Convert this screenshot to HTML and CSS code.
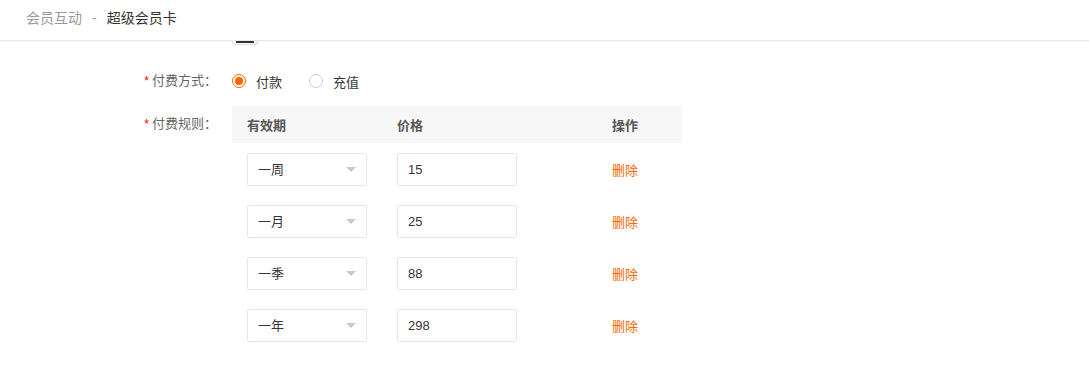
FILE: index.html
```html
<!DOCTYPE html>
<html lang="zh-CN">
<head>
    <meta charset="UTF-8">
    <meta name="viewport" content="width=device-width, initial-scale=1.0">
    <title>超级会员卡</title>
    <link rel="stylesheet" href="styles.css">
</head>
<body>
    <div class="header">
        <div class="crumb">
            <span class="crumb-parent">会员互动</span>
            <span class="crumb-sep">-</span>
            <span class="crumb-cur">超级会员卡</span>
        </div>
    </div>

    <div class="main">
        <div class="stub-row"><div class="stub"></div></div>

        <div class="form-item">
            <label class="form-label"><span class="req">*</span>付费方式：</label>
            <div class="form-control radios">
                <label class="radio checked"><span class="radio-dot"></span>付款</label>
                <label class="radio"><span class="radio-dot"></span>充值</label>
            </div>
        </div>

        <div class="form-item">
            <label class="form-label rule-label"><span class="req">*</span>付费规则：</label>
            <div class="form-control">
                <table class="rules">
                    <thead>
                        <tr>
                            <th class="col-period">有效期</th>
                            <th class="col-price">价格</th>
                            <th class="col-op">操作</th>
                        </tr>
                    </thead>
                    <tbody>
                        <tr>
                            <td><div class="select">一周<span class="arrow"></span></div></td>
                            <td><div class="input">15</div></td>
                            <td><a class="del">删除</a></td>
                        </tr>
                        <tr>
                            <td><div class="select">一月<span class="arrow"></span></div></td>
                            <td><div class="input">25</div></td>
                            <td><a class="del">删除</a></td>
                        </tr>
                        <tr>
                            <td><div class="select">一季<span class="arrow"></span></div></td>
                            <td><div class="input">88</div></td>
                            <td><a class="del">删除</a></td>
                        </tr>
                        <tr>
                            <td><div class="select">一年<span class="arrow"></span></div></td>
                            <td><div class="input">298</div></td>
                            <td><a class="del">删除</a></td>
                        </tr>
                    </tbody>
                </table>
            </div>
        </div>
    </div>
</body>
</html>
```

FILE: styles.css
```css
body {
    margin: 0;
    padding: 0;
    font-family: "Liberation Sans", "Noto Sans CJK SC", sans-serif;
    font-size: 13px;
    color: #333;
    background-color: #fff;
}

.header {
    height: 40px;
    border-bottom: 1px solid #e8e8e8;
    box-shadow: 0 1px 2px rgba(0,0,0,0.03);
    display: flex;
    align-items: center;
    padding-left: 26px;
}

.crumb {
    display: flex;
    font-size: 14px;
    line-height: 20px;
    margin-top: -4px;
}

.crumb-parent {
    color: #999;
}

.crumb-sep {
    color: #999;
    margin: 0 10px;
}

.crumb-cur {
    color: #333;
}

/* bottom of the field scrolled under the header */
.stub-row {
    height: 4px;
    padding-left: 232px;
}

.stub {
    width: 24px;
    height: 3px;
    border: 1px solid #ddd;
    border-top: none;
    border-radius: 0 0 3px 3px;
    position: relative;
}

.stub::before {
    content: "";
    position: absolute;
    left: 3px;
    right: 3px;
    top: 0;
    height: 2px;
    background-color: #333;
}

.form-item {
    display: flex;
    margin-top: 21px;
}

.form-item + .form-item {
    margin-top: 10px;
}

.form-label {
    width: 217px;
    text-align: right;
    color: #666;
    line-height: 30px;
    flex-shrink: 0;
}

.rule-label {
    line-height: 36px;
}

.req {
    color: #f00;
    margin-right: 3px;
    font-size: 12px;
}

.form-control {
    margin-left: 15px;
}

.radios {
    display: flex;
    align-items: center;
    height: 30px;
}

.radio {
    display: flex;
    align-items: center;
    color: #333;
    margin-right: 27px;
}

.radio-dot {
    width: 12px;
    height: 12px;
    border: 1px solid #ccc;
    border-radius: 50%;
    margin-right: 10px;
    position: relative;
    box-sizing: content-box;
}

.radio.checked .radio-dot {
    border-color: #f60;
}

.radio.checked .radio-dot::after {
    content: "";
    position: absolute;
    left: 2px;
    top: 2px;
    width: 8px;
    height: 8px;
    border-radius: 50%;
    background-color: #f60;
}

.rules {
    width: 450px;
    border-collapse: collapse;
}

.rules th {
    height: 37px;
    padding: 0 15px;
    text-align: left;
    background-color: #f7f7f7;
    color: #555;
    font-weight: bold;
}

.col-period {
    width: 120px;
}

.col-price {
    width: 185px;
}

.rules td {
    height: 52px;
    padding: 0 15px;
}

.select,
.input {
    width: 120px;
    height: 33px;
    box-sizing: border-box;
    border: 1px solid #e6e6e6;
    border-radius: 2px;
    padding-left: 10px;
    line-height: 31px;
    color: #333;
    background-color: #fff;
}

.select {
    position: relative;
}

.arrow {
    position: absolute;
    right: 10px;
    top: 13px;
    width: 0;
    height: 0;
    border-left: 5px solid transparent;
    border-right: 5px solid transparent;
    border-top: 5px solid #c8c8c8;
}

.del {
    color: #f60;
    cursor: pointer;
}
```
